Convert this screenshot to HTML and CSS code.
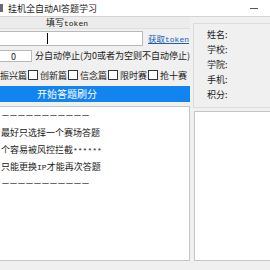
FILE: index.html
```html
<!DOCTYPE html>
<html lang="zh-CN">
<head>
    <meta charset="UTF-8">
    <title>挂机全自动AI答题学习</title>
    <link rel="stylesheet" href="styles.css">
</head>
<body>
    <div class="titlebar">
        <span class="app-icon"></span>
        <span class="title">挂机全自动AI答题学习</span>
        <span class="min-btn"><span class="min-bar"></span></span>
    </div>

    <div class="window">
        <div class="left">
            <div class="head-band">填写<span class="mono">token</span></div>

            <div class="token-row">
                <div class="token-input"><span class="caret"></span></div>
                <a class="link" href="#">获取<span class="mono">token</span></a>
            </div>

            <div class="stop-row">
                <div class="num-input">0</div>
                <span class="stop-text">分自动停止(为0或者为空则不自动停止)</span>
            </div>

            <div class="check-row">
                <label class="check"><span class="box"></span>振兴篇</label>
                <label class="check"><span class="box"></span>创新篇</label>
                <label class="check"><span class="box"></span>信念篇</label>
                <label class="check"><span class="box"></span>限时赛</label>
                <label class="check"><span class="box"></span>抢十赛</label>
            </div>

            <div class="start-btn">开始答题刷分</div>

            <div class="log">
                <div class="line dashes">－－－－－－－－－－－</div>
                <div class="line">最好只选择一个赛场答题</div>
                <div class="line">个容易被风控拦截<span class="mono">******</span></div>
                <div class="line">只能更换<span class="mono">IP</span>才能再次答题</div>
                <div class="line dashes">－－－－－－－－－－－</div>
            </div>
        </div>

        <div class="right">
            <div class="info">
                <div class="info-row">姓名:</div>
                <div class="info-row">学校:</div>
                <div class="info-row">学院:</div>
                <div class="info-row">手机:</div>
                <div class="info-row">积分:</div>
            </div>
            <div class="side-log"></div>
        </div>
    </div>
</body>
</html>
```

FILE: styles.css
```css
body {
    margin: 0;
    width: 270px;
    height: 270px;
    overflow: hidden;
    background-color: #f0f0f0;
    font-family: "Noto Sans CJK SC", sans-serif;
    font-size: 9px;
    color: #1a1a1a;
}

.mono {
    font-family: "Liberation Mono", monospace;
    font-size: 8px;
}

.titlebar {
    height: 16px;
    background-color: #ffffff;
    border-bottom: 1px solid #d4d4d4;
    display: flex;
    align-items: center;
}

.app-icon {
    width: 3px;
    height: 8px;
    background-color: #6b6b6b;
    margin-right: 5px;
}

.title {
    font-size: 9px;
    color: #222222;
}

.min-btn {
    margin-left: auto;
    margin-right: 12px;
    width: 8px;
    display: flex;
    align-items: center;
}

.min-bar {
    width: 8px;
    height: 1px;
    background-color: #555555;
}

.window {
    display: flex;
    gap: 3px;
    height: 248px;
}

.left {
    width: 246px;
    margin-left: -56px;
    flex-shrink: 0;
    display: flex;
    flex-direction: column;
    white-space: nowrap;
}

.head-band {
    height: 11px;
    line-height: 11px;
    text-align: center;
    background-color: #ececec;
    border-bottom: 1px solid #dedede;
}

.token-row {
    margin-top: 1px;
    height: 16px;
    display: flex;
    align-items: center;
}

.token-input {
    width: 199px;
    height: 15px;
    flex-shrink: 0;
    background-color: #ffffff;
    border: 1px solid #b9b9b9;
    display: flex;
    align-items: center;
    padding-left: 102px;
    box-sizing: border-box;
}

.caret {
    width: 1px;
    height: 11px;
    background-color: #000000;
}

.link {
    margin-left: 5px;
    color: #1c5fb8;
    text-decoration: underline;
    font-size: 8.5px;
}

.stop-row {
    margin-top: 3px;
    height: 13px;
    display: flex;
    align-items: center;
}

.num-input {
    width: 88px;
    height: 12px;
    line-height: 11px;
    flex-shrink: 0;
    box-sizing: border-box;
    background-color: #ffffff;
    border: 1px solid #b9b9b9;
    padding-left: 66px;
}

.stop-text {
    margin-left: 3px;
}

.check-row {
    margin-top: 7px;
    height: 12px;
    display: flex;
    align-items: center;
    padding-left: 44px;
    gap: 1px;
}

.check {
    display: flex;
    align-items: center;
    width: 39px;
    flex-shrink: 0;
}

.box {
    width: 8px;
    height: 8px;
    flex-shrink: 0;
    border: 1px solid #333333;
    background-color: #ffffff;
    margin-right: 2px;
}

.start-btn {
    margin-top: 5px;
    height: 16px;
    line-height: 16px;
    text-align: center;
    background-color: #1284f0;
    color: #ffffff;
    font-size: 10px;
}

.log {
    margin-top: 4px;
    flex: 1;
    background-color: #ffffff;
    border: 1px solid #c6c6c6;
    padding-left: 56px;
    margin-bottom: 4px;
}

.line {
    height: 17px;
    line-height: 17px;
}

.dashes {
    letter-spacing: -1px;
}

.right {
    flex: 1;
    display: flex;
    flex-direction: column;
}

.info {
    margin-top: 6px;
    height: 80px;
    border: 1px solid #dcdcdc;
    border-right: none;
    padding: 3px 0 0 13px;
}

.info-row {
    height: 15px;
    line-height: 15px;
}

.side-log {
    margin-top: 3px;
    margin-left: 1px;
    flex: 1;
    background-color: #ffffff;
    border: 1px solid #c6c6c6;
    border-right: none;
    margin-bottom: 4px;
}
```
